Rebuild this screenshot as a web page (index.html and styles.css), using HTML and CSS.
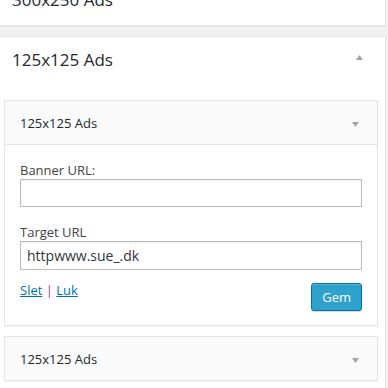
FILE: index.html
```html
<!DOCTYPE html>
<html lang="da">

<head>
    <meta charset="UTF-8" />
    <meta name="viewport" content="width=device-width, initial-scale=1.0" />
    <title>Widgets</title>
    <link rel="stylesheet" href="styles.css">
</head>

<body>
    <div class="sidebars">
        <div class="sidebar sidebar-closed">
            <div class="sidebar-name">
                <h2>300x250 Ads</h2>
                <svg class="arrow" width="7" height="5" viewBox="0 0 7 5"><polygon points="0,0 7,0 3.5,5" /></svg>
            </div>
        </div>

        <div class="sidebar">
            <div class="sidebar-name">
                <h2>125x125 Ads</h2>
                <svg class="arrow" width="7" height="5" viewBox="0 0 7 5"><polygon points="0,5 7,5 3.5,0" /></svg>
            </div>

            <div class="sidebar-widgets">
                <div class="widget widget-open">
                    <div class="widget-top">
                        <h3>125x125 Ads</h3>
                        <svg class="arrow" width="7" height="5" viewBox="0 0 7 5"><polygon points="0,0 7,0 3.5,5" /></svg>
                    </div>
                    <div class="widget-inside">
                        <label for="bannerUrl">Banner URL:</label>
                        <input type="text" id="bannerUrl" value="" />

                        <label for="targetUrl">Target URL</label>
                        <input type="text" id="targetUrl" value="httpwww.sue_.dk" />

                        <div class="widget-actions">
                            <div class="widget-links">
                                <a href="#">Slet</a> <span class="sep">|</span> <a href="#">Luk</a>
                            </div>
                            <button class="button-primary">Gem</button>
                        </div>
                    </div>
                </div>

                <div class="widget">
                    <div class="widget-top">
                        <h3>125x125 Ads</h3>
                        <svg class="arrow" width="7" height="5" viewBox="0 0 7 5"><polygon points="0,0 7,0 3.5,5" /></svg>
                    </div>
                </div>
            </div>
        </div>
    </div>
</body>

</html>
```

FILE: styles.css
```css
html,
body {
    height: 388px;
    overflow: hidden;
}

body {
    margin: 0;
    background: #f1f1f1;
    font-family: "Open Sans", "Noto Sans", sans-serif;
    color: #23282d;
}

.sidebars {
    width: 390px;
    margin-left: -4px;
}

.sidebar {
    background: #fff;
    border: 1px solid #e5e5e5;
    box-shadow: 0 1px 1px rgba(0, 0, 0, 0.04);
    height: 352px;
}

.sidebar-closed {
    height: auto;
    margin-top: -24px;
    margin-bottom: 10px;
}

.sidebar-name {
    display: flex;
    justify-content: space-between;
    align-items: center;
    padding: 11px 22px 11px 15px;
}

.sidebar-closed .sidebar-name {
    padding-bottom: 13px;
}

.sidebar-name h2 {
    margin: 0;
    font-size: 17px;
    font-weight: 400;
    line-height: 24px;
}

.arrow {
    display: block;
    fill: #a0a5aa;
}

.sidebar-name .arrow {
    margin-bottom: 5px;
}

.sidebar-widgets {
    padding: 17px 7px 0 7px;
}

.widget {
    border: 1px solid #e5e5e5;
    background: #fff;
    box-shadow: 0 1px 1px rgba(0, 0, 0, 0.04);
    margin-bottom: 10px;
}

.widget-top {
    display: flex;
    justify-content: space-between;
    align-items: center;
    height: 43px;
    padding: 0 18px 0 15px;
    background: #fafafa;
}

.widget-open .widget-top {
    border-bottom: 1px solid #e5e5e5;
}

.widget-top h3 {
    margin: 0;
    font-size: 13px;
    font-weight: 400;
    line-height: 18px;
}

.widget-top .arrow {
    margin-top: 3px;
}

.widget-inside {
    padding: 16px 15px 14px 15px;
}

.widget-inside label {
    display: block;
    font-size: 13px;
    line-height: 18px;
    color: #444;
}

.widget-inside input[type="text"] {
    display: block;
    box-sizing: border-box;
    width: 342px;
    height: 28px;
    margin: 0 0 16px 0;
    padding: 0 6px;
    border: 1px solid #bdbdbd;
    box-shadow: inset 0 1px 2px rgba(0, 0, 0, 0.07);
    font-family: "Open Sans", "Noto Sans", sans-serif;
    font-size: 14px;
    color: #32373c;
    outline: none;
}

.widget-inside input#targetUrl {
    height: 29px;
    margin-bottom: 0;
}

.widget-actions {
    display: flex;
    justify-content: space-between;
    align-items: flex-start;
    margin-top: 11px;
}

.widget-links {
    font-size: 13px;
    line-height: 18px;
}

.widget-links a {
    color: #0073aa;
}

.widget-links .sep {
    color: #8f4a8f;
}

.button-primary {
    margin-top: 2px;
    height: 28px;
    padding: 0 10px;
    border: 1px solid #0074a2;
    border-radius: 3px;
    background: #2ea2cc;
    box-shadow: inset 0 1px 0 rgba(120, 200, 230, 0.5), 0 1px 0 rgba(0, 0, 0, 0.15);
    color: #fff;
    font-family: "Open Sans", "Noto Sans", sans-serif;
    font-size: 13px;
    line-height: 26px;
    cursor: pointer;
}
```
